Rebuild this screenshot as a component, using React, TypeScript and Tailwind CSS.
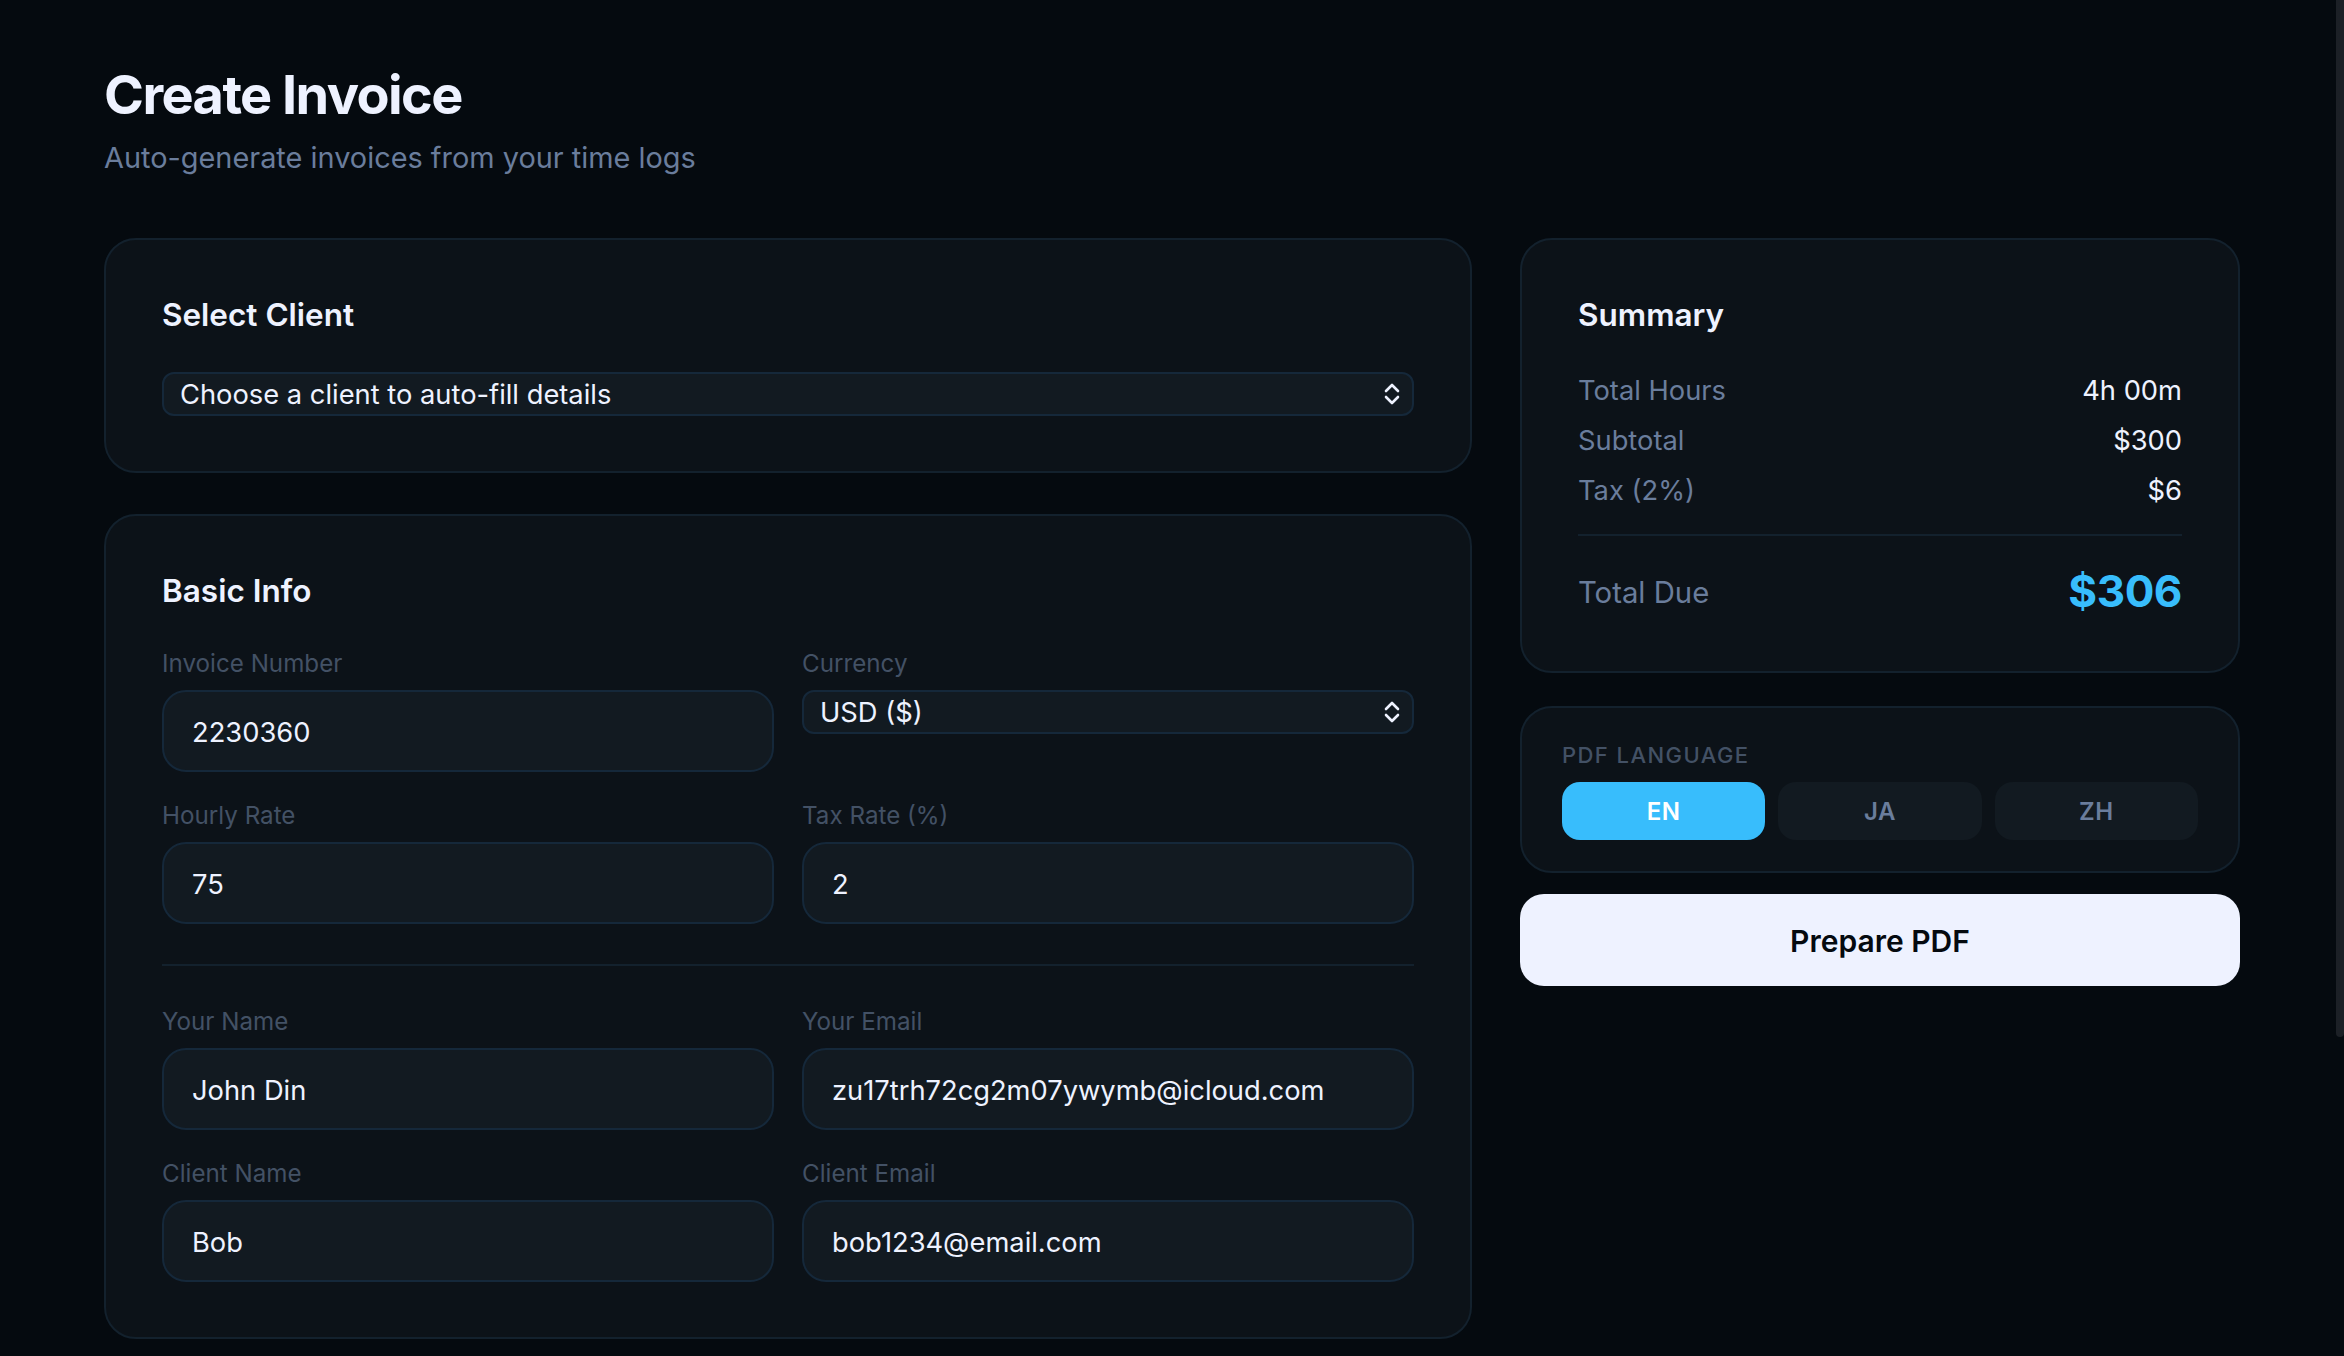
import { ReactNode } from 'react'

function Chevrons() {
  return (
    <svg
      className="absolute right-[14px] top-1/2 -translate-y-1/2 pointer-events-none"
      width="16"
      height="24"
      viewBox="0 0 16 24"
      fill="none"
      stroke="#eef2ff"
      strokeWidth="2.6"
      strokeLinecap="round"
      strokeLinejoin="round"
    >
      <path d="M2 9 L8 3 L14 9" />
      <path d="M2 15 L8 21 L14 15" />
    </svg>
  )
}

function Card({ className = '', children }: { className?: string; children: ReactNode }) {
  return <div className={`rounded-[32px] border-2 border-[#13212d] bg-[#0c1218] ${className}`}>{children}</div>
}

function Heading({ children }: { children: ReactNode }) {
  return <h2 className="text-[31.5px] leading-[48px] font-semibold text-[#eef2ff]">{children}</h2>
}

function Picker({ value }: { value: string }) {
  return (
    <div className="relative h-[44px]">
      <select
        defaultValue={value}
        className="h-full w-full appearance-none rounded-[12px] border-2 border-[#15283a] bg-[#121a21] pl-[16px] pt-[2px] text-[27.3px] leading-none text-[#eef2ff] outline-none"
      >
        <option>{value}</option>
      </select>
      <Chevrons />
    </div>
  )
}

function Field({ label, value, children }: { label: string; value?: string; children?: ReactNode }) {
  return (
    <div className="min-w-0">
      <label className="block h-[36px] text-[24.2px] leading-[36px] text-[#435165]">{label}</label>
      <div className="mt-[8px]">
        {children ?? (
          <input
            readOnly
            value={value}
            className="h-[82px] w-full rounded-[24px] border-2 border-[#15283a] bg-[#121a21] px-[28px] pt-[2px] text-[27.3px] text-[#eef2ff] outline-none"
          />
        )}
      </div>
    </div>
  )
}

function Row({ label, value }: { label: string; value: string }) {
  return (
    <div className="flex h-[50px] items-center justify-between text-[27.3px]">
      <span className="text-[#6a7d9c]">{label}</span>
      <span className="text-[#eef2ff]">{value}</span>
    </div>
  )
}

function LangButton({ label, active }: { label: string; active?: boolean }) {
  return (
    <button
      className={`h-[58px] flex-1 rounded-[18px] pt-[2px] text-[24px] font-semibold tracking-[0.02em] ${
        active ? 'bg-[#38bdfc] text-white' : 'bg-[#121a21] text-[#6a7d9c]'
      }`}
    >
      {label}
    </button>
  )
}

export default function App() {
  return (
    <div className="relative h-[1356px] overflow-hidden bg-[#050a0f] pl-[104px] pt-[60px] font-['Inter',sans-serif] antialiased">
      {/* Page header */}
      <h1 className="text-[54px] leading-[70px] font-bold tracking-[-0.029em] text-[#eef2ff]">Create Invoice</h1>
      <p className="mt-[6px] text-[28.9px] leading-[44px] text-[#6a7d9c]">Auto-generate invoices from your time logs</p>

      <div className="mt-[58px] grid w-[2136px] grid-cols-[1368px_720px] gap-x-[48px]">
        {/* Left column */}
        <div className="flex flex-col gap-[41px]">
          <Card className="h-[235px] px-[56px] pt-[51px]">
            <Heading>Select Client</Heading>
            <div className="mt-[33px]">
              <Picker value="Choose a client to auto-fill details" />
            </div>
          </Card>

          <Card className="h-[825px] px-[56px] pt-[51px]">
            <Heading>Basic Info</Heading>
            <div className="mt-[31px] grid grid-cols-2 gap-x-[28px] gap-y-[26px]">
              <Field label="Invoice Number" value="2230360" />
              <Field label="Currency">
                <div className="h-[82px]">
                  <Picker value="USD ($)" />
                </div>
              </Field>
              <Field label="Hourly Rate" value="75" />
              <Field label="Tax Rate (%)" value="2" />
            </div>
            <div className="mt-[40px] h-[2px] bg-[#13212d]" />
            <div className="mt-[38px] grid grid-cols-2 gap-x-[28px] gap-y-[26px]">
              <Field label="Your Name" value="John Din" />
              <Field label="Your Email" value="zu17trh72cg2m07ywymb@icloud.com" />
              <Field label="Client Name" value="Bob" />
              <Field label="Client Email" value="bob1234@email.com" />
            </div>
          </Card>
        </div>

        {/* Right column */}
        <div>
          <Card className="h-[435px] px-[56px] pt-[51px]">
            <Heading>Summary</Heading>
            <div className="mt-[27px]">
              <Row label="Total Hours" value="4h 00m" />
              <Row label="Subtotal" value="$300" />
              <Row label="Tax (2%)" value="$6" />
            </div>
            <div className="mt-[18px] h-[2px] bg-[#13212d]" />
            <div className="mt-[27px] flex items-center justify-between">
              <span className="text-[29.3px] text-[#6a7d9c]">Total Due</span>
              <span className="pb-[4px] text-[44px] leading-[56px] font-bold tracking-[-0.01em] text-[#38bdfc]">$306</span>
            </div>
          </Card>

          <Card className="mt-[33px] h-[167px] px-[40px] pt-[32px]">
            <div className="text-[22px] leading-[30px] font-medium tracking-[0.065em] text-[#435165]">PDF LANGUAGE</div>
            <div className="mt-[12px] flex gap-[13px]">
              <LangButton label="EN" active />
              <LangButton label="JA" />
              <LangButton label="ZH" />
            </div>
          </Card>

          <button className="mt-[21px] h-[92px] w-full rounded-[24px] bg-[#eef2ff] pt-[2px] text-[30px] font-semibold text-[#050a0f]">
            Prepare PDF
          </button>
        </div>
      </div>

      {/* Scrollbar thumb */}
      <div className="absolute right-0 top-0 h-[1037px] w-[8px] rounded-b-[6px] bg-[#1c2026]" />
    </div>
  )
}
